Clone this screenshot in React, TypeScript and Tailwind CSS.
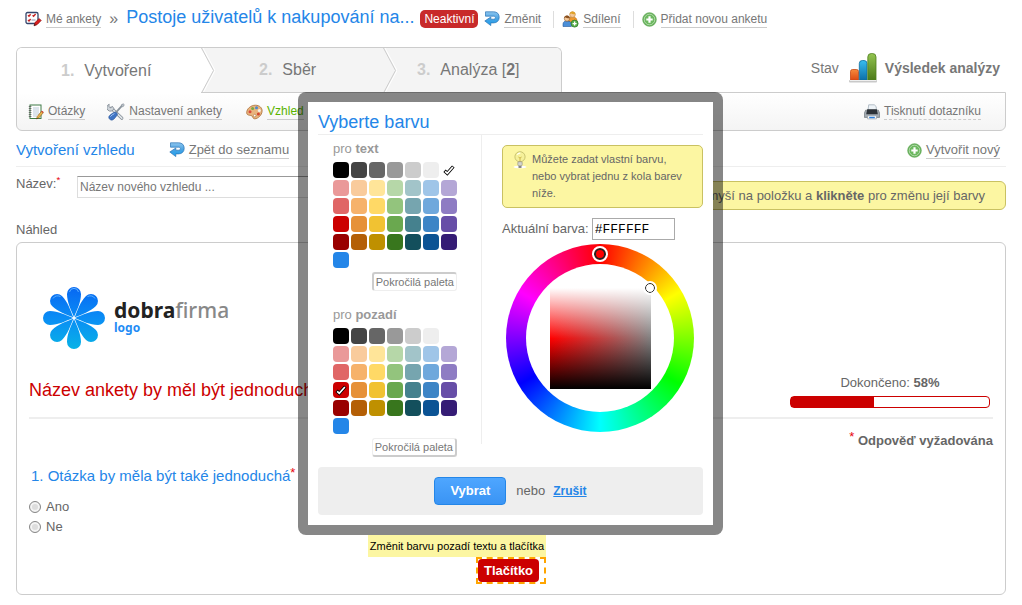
import React, { useState } from "react";
import clsx from "clsx";

const SWATCHES = [
  "bg-black", "bg-[#444444]", "bg-[#666666]", "bg-[#999999]", "bg-[#cccccc]", "bg-[#eeeeee]", "bg-white",
  "bg-[#ea9999]", "bg-[#f9cb9c]", "bg-[#ffe599]", "bg-[#b6d7a8]", "bg-[#a2c4c9]", "bg-[#9fc5e8]", "bg-[#b4a7d6]",
  "bg-[#e06666]", "bg-[#f6b26b]", "bg-[#ffd966]", "bg-[#93c47d]", "bg-[#76a5af]", "bg-[#6fa8dc]", "bg-[#8e7cc3]",
  "bg-[#cc0000]", "bg-[#e69138]", "bg-[#f1c232]", "bg-[#6aa84f]", "bg-[#45818e]", "bg-[#3d85c6]", "bg-[#674ea7]",
  "bg-[#990000]", "bg-[#b45f06]", "bg-[#bf9000]", "bg-[#38761d]", "bg-[#134f5c]", "bg-[#0b5394]", "bg-[#351c75]",
  "bg-[#2486e8]",
];

const PETALS = [0, 45, 90, 135, 180, 225, 270, 315];

const SurveysIcon = () => (
  <svg width="17" height="16" viewBox="0 0 17 16" className="shrink-0">
    <rect x="1" y="1.5" width="12" height="11" rx="1.5" fill="#fff" stroke="#34456b" strokeWidth="1.3" />
    <path d="M3 4.2l1 1 1.6-2M3 9l1 1 1.6-2M7.6 4.2l1 1 2-2.2" stroke="#c62121" strokeWidth="1.4" fill="none" />
    <path d="M6.5 9h4" stroke="#8a94ad" />
    <path d="M9 14.8l1-3.2 4.2-4.1 2 2-4.2 4.2z" fill="#d91e1e" stroke="#8d1010" strokeWidth=".7" />
    <path d="M9 14.8l.6-1.9 1.3 1.2z" fill="#222" />
  </svg>
);

const BackIcon = () => (
  <svg width="16" height="16" viewBox="0 0 16 16" className="shrink-0">
    <defs>
      <linearGradient id="back" x1="0" y1="0" x2="0" y2="1">
        <stop offset="0" stopColor="#8cc4ee" />
        <stop offset=".5" stopColor="#4aa3e2" />
        <stop offset="1" stopColor="#19a0f0" />
      </linearGradient>
    </defs>
    <path
      d="M1.5 .8H9.6C13.2 .8 15.2 3 15.2 6.3S13 11.900 9.600 11.900H6.800V14.600L.8 10 6.800 6V8.200H9.600C10.800 8.200 11.400 7.500 11.400 6.600S10.800 5.200 9.600 5.200H1.500Z"
      fill="url(#back)"
      stroke="#2a72b5"
      strokeWidth=".7"
      strokeLinejoin="round"
    />
  </svg>
);

const ShareIcon = () => (
  <svg width="17" height="17" viewBox="0 0 17 17" className="shrink-0">
    <path d="M6.5 9.5c0-2.4 1.6-3.5 4-3.5s4.4 1.1 4.4 3.5V12H6.5z" fill="#f0982c" stroke="#b9660e" strokeWidth=".6" />
    <circle cx="10.5" cy="3.6" r="2.8" fill="#f4c89a" stroke="#b98232" strokeWidth=".6" />
    <path d="M7.7 3.3C7.7 1.4 9 .4 10.5.4s2.9 1 2.9 2.9c-1.6.2-4-.2-4.3-1z" fill="#e0a22a" />
    <path d="M1 15.5v-2.4C1 11 2.5 10 5 10s4.4 1 4.4 3.1v2.4z" fill="#4b8fd8" stroke="#23599c" strokeWidth=".6" />
    <circle cx="5" cy="7.6" r="2.7" fill="#f4c89a" stroke="#8d5a28" strokeWidth=".6" />
    <path d="M2.2 7.3C2.2 5.4 3.5 4.5 5 4.5s2.8.9 2.8 2.8c-1.6.2-3.8-.2-4.2-1z" fill="#8a4f1e" />
    <circle cx="12.6" cy="12.6" r="3.5" fill="#5aae4a" stroke="#2f7d28" strokeWidth=".8" />
    <path d="M12.6 10.6v4M10.6 12.6h4" stroke="#fff" strokeWidth="1.3" />
  </svg>
);

const AddIcon = () => (
  <svg width="15" height="15" viewBox="0 0 15 15" className="shrink-0">
    <circle cx="7.5" cy="7.5" r="6.8" fill="#4ea241" stroke="#6eb263" strokeWidth=".8" />
    <circle cx="7.5" cy="7.5" r="5.4" fill="#6db960" stroke="#cfe9ca" strokeWidth=".8" />
    <path d="M7.5 4.3v6.4M4.3 7.5h6.4" stroke="#fff" strokeWidth="2.2" />
  </svg>
);

const NotebookIcon = () => (
  <svg width="16" height="16" viewBox="0 0 16 16" className="shrink-0">
    <rect x="2" y="1" width="11" height="13.5" fill="#fff" stroke="#3f7a46" />
    <path d="M5 4h6M5 6h6M5 8h6M5 10h6M5 12h4" stroke="#a9bccf" strokeWidth=".8" />
    <path d="M.8 2.5h2.6M.8 4.5h2.6M.8 6.5h2.6M.8 8.5h2.6M.8 10.5h2.6M.8 12.5h2.6" stroke="#555" strokeWidth=".8" />
    <path d="M8.6 15l.7-2.6 4.3-5.3 1.8 1.5-4.4 5.2z" fill="#e8b34a" stroke="#8a5a16" strokeWidth=".6" />
    <path d="M13.1 7.7l.8-1 1.8 1.4-.8 1z" fill="#d0463c" />
    <path d="M8.6 15l.3-1.2.9.7z" fill="#222" />
  </svg>
);

const ToolsIcon = () => (
  <svg width="18" height="18" viewBox="0 0 18 18" className="shrink-0">
    <path d="M4.2 5.2l10.6 10" stroke="#7d8790" strokeWidth="3.2" strokeLinecap="round" />
    <path d="M4.2 5.2l10.6 10" stroke="#dfe4e8" strokeWidth="1.8" strokeLinecap="round" />
    <path d="M2.2 1.2A3.6 3.6 0 1 0 6.9 5.6L5.4 3.3 3.8 4.9 1.9 3.7z" fill="#cfd5da" stroke="#7d8790" strokeWidth=".8" />
    <path d="M16.2 1.4L9 9.3" stroke="#89939c" strokeWidth="1.8" />
    <path d="M14.6 1.6l1.8-.8.9.9-.9 1.8-1.2.4-.9-.9z" fill="#b9c1c8" stroke="#7d8790" strokeWidth=".5" />
    <path d="M8.5 9l2 1.8c-.2 1.6-3.300 5.900-5.300 6.300-1.800.3-3.800-1.500-3.400-3.300C2.300 12 7 9 8.500 9z" fill="#3f74c4" stroke="#244f93" strokeWidth=".6" />
    <path d="M3.4 13.6c1-1.3 2.600-2.400 4-3" stroke="#a9c8f2" fill="none" />
  </svg>
);

const PaletteIcon = () => (
  <svg width="17" height="16" viewBox="0 0 17 16" className="shrink-0">
    <path
      d="M9.5 1.2c4 .1 6.8 2.6 6.6 5.9-.2 4-4 7.6-7.4 7.7-2 0-1.6-1.9-2.7-2.8C4.6 10.900.8 11.900.7 8.800.6 4.700 5 1.100 9.500 1.200z"
      fill="#e9b47e"
      stroke="#a86c34"
      strokeWidth=".8"
    />
    <circle cx="4" cy="7.7" r="1.5" fill="#d94a3a" />
    <circle cx="6.6" cy="4.5" r="1.5" fill="#7aa843" />
    <circle cx="10.5" cy="3.8" r="1.5" fill="#4c86cc" />
    <circle cx="13.3" cy="6.5" r="1.5" fill="#f3f0ea" />
    <circle cx="12.4" cy="10" r="1.5" fill="#d4452f" />
    <circle cx="8.7" cy="11.6" r="1.3" fill="#fff" stroke="#a86c34" strokeWidth=".6" />
  </svg>
);

const PrinterIcon = () => (
  <svg width="16" height="16" viewBox="0 0 16 16" className="shrink-0">
    <path d="M4 6.5L4.7.8h5.6l1.9 1.8.2 3.9z" fill="#eef3f7" stroke="#98a6b2" strokeWidth=".7" />
    <path d="M1.6 6.2h12.8l1.2 3v4.2H.4V9.2z" fill="#a3abb2" stroke="#6a7279" strokeWidth=".7" />
    <path d="M3.2 5.3h9.6l1 4.9H2.2z" fill="#2c3238" />
    <path d="M3.6 11.7h8.8v3.2H3.6z" fill="#fff" stroke="#8a949c" strokeWidth=".6" />
    <path d="M5.2 13.5h5.6" stroke="#2a7ddb" strokeWidth="1.5" />
  </svg>
);

const ChartIcon = () => (
  <svg width="28" height="30" viewBox="0 0 28 30" className="shrink-0">
    <defs>
      <linearGradient id="bar-a" x1="0" y1="0" x2="0" y2="1">
        <stop offset="0" stopColor="#f58a3c" />
        <stop offset="1" stopColor="#dd4a12" />
      </linearGradient>
      <linearGradient id="bar-b" x1="0" y1="0" x2="0" y2="1">
        <stop offset="0" stopColor="#38bdf0" />
        <stop offset="1" stopColor="#0c6fa8" />
      </linearGradient>
      <linearGradient id="bar-c" x1="0" y1="0" x2="0" y2="1">
        <stop offset="0" stopColor="#93c450" />
        <stop offset="1" stopColor="#4c7a18" />
      </linearGradient>
    </defs>
    <path d="M1.5 27V18.5q0-2 2-2h4q2 0 2 2V27z" fill="url(#bar-a)" stroke="#c54a16" strokeWidth=".8" />
    <path d="M10.300 27V10.500q0-3 3-3h1.700q3 0 3 3V27z" fill="url(#bar-b)" stroke="#0d6d9e" strokeWidth=".8" />
    <path d="M18.800 27V4q0-3.500 3.500-3.500h1.200q3.500 0 3.500 3.500v23z" fill="url(#bar-c)" stroke="#4f7f1c" strokeWidth=".8" />
    <rect x="0" y="27" width="28" height="2.6" rx="1" fill="#c9c9c9" />
    <path d="M1 27.5h26" stroke="#efefef" />
  </svg>
);

const BulbIcon = () => (
  <svg width="14" height="18" viewBox="0 0 14 18" className="shrink-0">
    <ellipse cx="7" cy="16" rx="6.5" ry="1.3" fill="#fff" />
    <circle cx="7" cy="5.8" r="5.1" fill="#f6f19a" stroke="#bdb765" strokeWidth=".8" />
    <path d="M4.3 3.6c.7-1 1.7-1.5 3-1.4" stroke="#fff" strokeWidth="1.2" fill="none" />
    <path d="M5.4 6l1.6 1 1.6-1M7 7v4" stroke="#c4a93b" strokeWidth=".8" fill="none" />
    <rect x="4.8" y="10.7" width="4.4" height="4" rx="1" fill="#d5d5cd" stroke="#8d8d80" strokeWidth=".6" />
    <path d="M5.5 16h3" stroke="#3b3b3b" strokeWidth="1.2" />
  </svg>
);

const CheckMark = () => (
  <svg width="12" height="12" viewBox="0 0 12 12" fill="none">
    <path d="M1.5 6.8l2.8 2.5L10.3 2.5" stroke="#000" strokeWidth="3.4" />
    <path d="M2.1 7.300l2.200 1.900L9.900 3" stroke="#fff" strokeWidth="1.7" />
  </svg>
);

const FlowerLogo = () => (
  <svg width="64" height="64" viewBox="-32 -32 64 64" className="shrink-0">
    <defs>
      <linearGradient id="petals" gradientUnits="userSpaceOnUse" x1="0" y1="-31" x2="0" y2="31">
        <stop offset="0" stopColor="#0767f2" />
        <stop offset=".5" stopColor="#0a8df5" />
        <stop offset="1" stopColor="#08b2e6" />
      </linearGradient>
      <clipPath id="flower">
        {PETALS.map((angle) => (
          <path
            key={angle}
            d="M0 -1C-3 -8 -7 -16 -7 -24A7 7 0 0 1 7 -24C7 -16 3 -8 0 -1z"
            transform={`rotate(${angle})`}
          />
        ))}
      </clipPath>
    </defs>
    <rect x="-32" y="-32" width="64" height="64" fill="url(#petals)" clipPath="url(#flower)" />
    <path d="M-4.5 -26a4.6 4.6 0 0 1 9 0M13.5 -21.5q5-2 7.5 2M-13.5 -21.5q-5-2-7.5 2" stroke="#5cb0ff" fill="none" />
  </svg>
);

interface IconLinkProps {
  icon: React.ReactNode;
  children: React.ReactNode;
  className?: string;
  textClassName?: string;
}

const IconLink = ({ icon, children, className, textClassName }: IconLinkProps) => (
  <a href="#" className={clsx("flex items-center gap-1 whitespace-nowrap", className)}>
    {icon}
    <span className={clsx("border-b leading-4", textClassName ?? "border-[#ccc]")}>{children}</span>
  </a>
);

const TabArrow = ({ from }: { from: string }) => (
  <svg width="14" height="45" viewBox="0 0 14 45" className="shrink-0">
    <rect width="14" height="45" fill="#f4f4f4" />
    <path d="M0 0L12.5 22.5 0 45z" fill={from} />
    <path d="M2 0L14 22.5 2 45" stroke="#fff" fill="none" />
    <path d="M.5 0L12.5 22.5 .5 45M0 44.5H14" stroke="#ccc" fill="none" />
  </svg>
);

const TabLabel = ({ number, children }: { number: number; children: React.ReactNode }) => (
  <a href="#" className="flex gap-[10px] text-base">
    <span className="font-bold text-[#ccc]">{number}.</span>
    <span>{children}</span>
  </a>
);

interface PaletteProps {
  target: string;
  selected: number;
  onSelect: (index: number) => void;
  open?: boolean;
}

const Palette = ({ target, selected, onSelect, open }: PaletteProps) => (
  <section className="flex flex-col pl-[15px]">
    <h3 className="text-[13px] leading-[15px] text-[#999]">
      pro <b>{target}</b>
    </h3>
    <div className="mt-[6px] grid w-fit grid-cols-7 gap-[2px]">
      {SWATCHES.map((swatch, index) => (
        <button
          key={swatch}
          type="button"
          aria-label={`Barva ${index + 1}`}
          aria-pressed={index === selected}
          onClick={() => onSelect(index)}
          className={clsx("flex size-4 items-center justify-center rounded", swatch)}
        >
          {index === selected && <CheckMark />}
        </button>
      ))}
    </div>
    <button
      type="button"
      className={clsx(
        "mt-1 mr-6 self-end rounded-[3px] border px-[2px] text-[11px] leading-4 whitespace-nowrap text-[#777]",
        open
          ? "border-[#eee] border-t-[#ccc] border-l-[#ccc] border-t-2 border-l-2"
          : "border-[#eee] border-r-[#ccc] border-b-[#ccc] border-r-2 border-b-2"
      )}
    >
      Pokročilá paleta
    </button>
  </section>
);

const ColorWheel = () => (
  <div className="relative flex size-[188px] items-center justify-center rounded-full bg-[conic-gradient(#f00,#ff0,#0f0,#0ff,#00f,#f0f,#f00)]">
    <div className="flex size-[148px] items-center justify-center rounded-full bg-white">
      <div className="size-[101px] bg-[linear-gradient(to_bottom,#fff,rgba(255,255,255,0)_50%,rgba(0,0,0,0)_50%,#000),linear-gradient(to_right,#f00,#808080)]" />
    </div>
    <span className="absolute top-1 left-[88px] size-3 rounded-full border-2 border-[#222] bg-[#f00] outline-2 outline-white" />
    <span className="absolute top-[39px] left-[139px] size-[10px] rounded-full border border-[#222] bg-white outline-2 outline-white" />
  </div>
);

const ColorDialog = () => {
  const [textColor, setTextColor] = useState(6);
  const [backColor, setBackColor] = useState(21);
  const [hex, setHex] = useState("#FFFFFF");

  return (
    <div className="absolute top-[92px] right-px left-0 z-20 flex justify-center">
      <div
        role="dialog"
        aria-labelledby="dialog-title"
        className="w-[425px] rounded-lg border-10 border-black/47 bg-white bg-clip-padding p-[10px]"
      >
        <h2 id="dialog-title" className="border-b border-[#eee] pb-[2px] text-lg leading-5 text-[#2486e8]">
          Vyberte barvu
        </h2>
        <div className="flex items-start">
          <div className="flex w-[163px] flex-col gap-4 pt-[6px]">
            <Palette target="text" selected={textColor} onSelect={setTextColor} open />
            <Palette target="pozadí" selected={backColor} onSelect={setBackColor} />
          </div>
          <div className="flex-1 border-l border-[#eee] pt-[10px] pb-3 pl-5">
            <div className="flex items-start gap-[5px] rounded-[5px] border border-[#c9c162] bg-[#fcf6a2] py-[5px] pl-[10px] text-[11px] leading-[17px]">
              <BulbIcon />
              <p className="flex-1 pr-4">Můžete zadat vlastní barvu, nebo vybrat jednu z kola barev níže.</p>
            </div>
            <div className="mt-[10px] flex items-center gap-[3px] text-[13px]">
              <label htmlFor="hex">Aktuální barva:</label>
              <input
                id="hex"
                value={hex}
                onChange={(e) => setHex(e.target.value)}
                className="h-[22px] w-[83px] border border-[#aaa] bg-white px-[2px] font-['Liberation_Mono',monospace] text-[13px] text-black"
              />
            </div>
            <div className="mt-1 ml-1">
              <ColorWheel />
            </div>
          </div>
        </div>
        <div className="mt-[10px] flex items-center justify-center rounded bg-[#eee] py-[10px] text-[13px]">
          <button
            type="button"
            className="mr-[10px] h-7 rounded border border-[#2486e8] bg-linear-to-b from-[#4ea6ff] to-[#3a94f4] px-[15px] font-bold text-white"
          >
            Vybrat
          </button>
          nebo
          <a href="#" className="ml-2 text-xs font-bold text-[#2486e8] underline">
            Zrušit
          </a>
        </div>
      </div>
    </div>
  );
};

const SurveyPreview = () => (
  <div className="mt-1 rounded-md border border-[#ccc] px-3 pt-[43px] pb-[10px]">
    <div className="flex gap-2 pl-[13px]">
      <FlowerLogo />
      <div className="pt-3 font-['Noto_Sans',sans-serif] font-bold">
        <p className="text-[21px] leading-6 text-[#222]">
          dobra<span className="font-medium text-[#888]">firma</span>
        </p>
        <p className="text-xs leading-3 text-[#1f8cf5]">logo</p>
      </div>
    </div>

    <div className="mt-6 flex justify-between border-b-2 border-[#eee] pb-[9px]">
      <h2 className="pt-1 text-lg leading-6 text-[#c00]">Název ankety by měl být jednoduchý</h2>
      <div className="mr-[3px] w-[200px] text-[13px]">
        <p className="text-center leading-[18px]">
          Dokončeno: <b>58%</b>
        </p>
        <div className="mt-1 h-3 rounded border border-[#c00] bg-white">
          <div className="h-full w-[42%] bg-[#c00]" />
        </div>
      </div>
    </div>

    <p className="mt-3 text-right text-[13px] leading-5 font-bold">
      <span className="relative bottom-1 font-normal text-red-600">*</span> Odpověď vyžadována
    </p>

    <fieldset className="mt-[13px]">
      <legend className="pl-[2px] text-[15px] leading-6 whitespace-nowrap text-[#2486e8]">
        1. Otázka by měla být také jednoduchá
        <span className="relative bottom-1 text-[13px] text-red-600">*</span>
      </legend>
      <div className="mt-2 flex flex-col text-[13px] leading-5">
        {["Ano", "Ne"].map((answer) => (
          <label key={answer} className="flex items-center gap-[5px]">
            <input
              type="radio"
              name="answer"
              className="size-3 appearance-none rounded-full border border-[#888] bg-[#ddd] inset-ring-2 inset-ring-[#f4f4f4] checked:bg-[#2486e8]"
            />
            {answer}
          </label>
        ))}
      </div>
    </fieldset>

    <div className="relative mx-auto mt-5 w-fit border-2 border-dashed border-[#ffa500] pr-[5px]">
      <button type="button" className="block h-[23px] rounded bg-[#c00] px-[6px] text-[13px] font-bold text-white">
        Tlačítko
      </button>
      <div
        role="tooltip"
        className="absolute right-[-2px] bottom-full mb-[2px] bg-[#fcf6a2] px-[2px] text-[11px] leading-[22px] whitespace-nowrap text-black"
      >
        Změnit barvu pozadí textu a tlačítka
      </div>
    </div>
  </div>
);

const App: React.FC = () => {
  const [name, setName] = useState("");

  return (
    <div className="relative min-h-screen bg-white px-4 pt-2 pb-[10px] font-['Liberation_Sans',Arial,sans-serif] text-xs text-[#666]">
      <header className="flex h-[22px] items-center pl-[9px] text-[#777]">
        <IconLink icon={<SurveysIcon />}>Mé ankety</IconLink>
        <span className="mx-2 text-base leading-5">»</span>
        <h1 className="pb-1 text-lg leading-5 whitespace-nowrap text-[#2486e8]">
          Postoje uživatelů k nakupování na...
        </h1>
        <span className="ml-[6px] rounded-[5px] bg-[#c82a2a] px-1 leading-[18px] text-white">Neaktivní</span>
        <IconLink icon={<BackIcon />} className="ml-[6px]">Změnit</IconLink>
        <IconLink icon={<ShareIcon />} className="ml-3 border-l border-[#ddd] pl-2">Sdílení</IconLink>
        <IconLink icon={<AddIcon />} className="ml-3 border-l border-[#ddd] pl-2">Přidat novou anketu</IconLink>
      </header>

      <div className="mt-[17px] flex justify-between">
        <nav className="relative z-10 -mb-px flex h-[46px] items-stretch overflow-hidden rounded-t-md border border-b-0 border-[#ccc] text-[#777]">
          <div className="flex w-[184px] items-center bg-white pl-11">
            <TabLabel number={1}>Vytvoření</TabLabel>
          </div>
          <TabArrow from="#fff" />
          <div className="flex w-[168px] items-center border-b border-[#ccc] bg-[#f4f4f4] pl-11">
            <TabLabel number={2}>Sběr</TabLabel>
          </div>
          <TabArrow from="#f4f4f4" />
          <div className="flex w-[164px] items-center border-b border-[#ccc] bg-[#f4f4f4] pl-5">
            <TabLabel number={3}>
              Analýza [<b>2</b>]
            </TabLabel>
          </div>
        </nav>
        <div className="flex items-center gap-[10px] pr-[6px] pb-[3px] text-sm text-[#777]">
          Stav
          <a href="#" className="flex items-center gap-2 font-bold">
            <ChartIcon />
            Výsledek analýzy
          </a>
        </div>
      </div>

      <div className="flex h-[39px] items-center rounded-b-md border border-[#ccc] bg-linear-to-b from-white to-[#f4f4f4] pr-6 pl-[11px] text-[#777]">
        <IconLink icon={<NotebookIcon />}>Otázky</IconLink>
        <IconLink icon={<ToolsIcon />} className="ml-[22px]">Nastavení ankety</IconLink>
        <IconLink icon={<PaletteIcon />} className="ml-6 text-[#59b200]">Vzhled</IconLink>
        <IconLink icon={<PrinterIcon />} className="ml-auto" textClassName="border-dashed border-[#ccc]">
          Tisknutí dotazníku
        </IconLink>
      </div>

      <div className="flex h-9 items-center border-b border-[#eee] pt-[3px] text-[13px] text-[#777]">
        <h2 className="text-[15px] text-[#2486e8]">Vytvoření vzhledu</h2>
        <IconLink icon={<BackIcon />} className="ml-[34px]">Zpět do seznamu</IconLink>
        <IconLink icon={<AddIcon />} className="mr-[6px] ml-auto">Vytvořit nový</IconLink>
      </div>

      <div className="flex items-start justify-between pt-[9px] text-[13px]">
        <div className="flex items-start">
          <label htmlFor="design-name" className="w-[61px] leading-4">
            Název:<sup className="text-red-600">*</sup>
          </label>
          <input
            id="design-name"
            value={name}
            onChange={(e) => setName(e.target.value)}
            placeholder="Název nového vzhledu ..."
            className="h-[22px] w-[300px] border border-[#ddd] border-t-[#999] px-[2px] text-xs placeholder:text-[#777]"
          />
        </div>
        <p className="mt-[5px] rounded-md border border-[#c9c162] bg-[#fcf6a2] pr-5 pl-12 leading-[27px]">
          myší na položku a <b>klikněte</b> pro změnu její barvy
        </p>
      </div>

      <p className="mt-3 text-[13px] leading-4">Náhled</p>
      <SurveyPreview />
      <ColorDialog />
    </div>
  );
};

export default App;
